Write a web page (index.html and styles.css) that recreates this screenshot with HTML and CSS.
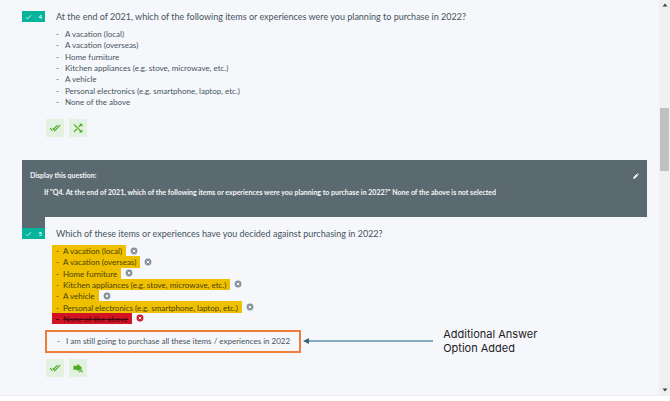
FILE: index.html
```html
<!DOCTYPE html>
<html lang="en">
<head>
<meta charset="utf-8">
<title>Survey editor</title>
<link rel="stylesheet" href="styles.css">
</head>
<body>
<svg class="defs" aria-hidden="true">
  <symbol id="double-check" viewBox="0 0 12 8"><path d="M1 4.2 3.3 6.6M3.6 4.2 5.8 6.6 11.2 1.2M4.8 4.9 8.6 1.2" fill="none" stroke="currentColor" stroke-width="1.1"/></symbol>
  <symbol id="check" viewBox="0 0 8 6"><path d="M1 3.2 2.8 5 7 1" fill="none" stroke="currentColor" stroke-width="1"/></symbol>
  <symbol id="remove" viewBox="0 0 8 8"><circle cx="4" cy="4" r="3.4" fill="currentColor"/><path d="M2.7 2.7 5.3 5.3M5.3 2.7 2.7 5.3" stroke="#f5f7fb" stroke-width="1"/></symbol>
</svg>
<div class="screen">
  <main class="page">
    <section class="question">
      <div class="rail"><div class="badge"><svg class="tick"><use href="#check"/></svg><span>4</span></div></div>
      <div class="body">
        <h2>At the end of 2021, which of the following items or experiences were you planning to purchase in 2022?</h2>
        <ul class="options">
          <li><span>A vacation (local)</span></li>
          <li><span>A vacation (overseas)</span></li>
          <li><span>Home furniture</span></li>
          <li><span>Kitchen appliances (e.g. stove, microwave, etc.)</span></li>
          <li><span>A vehicle</span></li>
          <li><span>Personal electronics (e.g. smartphone, laptop, etc.)</span></li>
          <li><span>None of the above</span></li>
        </ul>
        <div class="tools">
          <button type="button" aria-label="Validation"><svg class="double"><use href="#double-check"/></svg></button>
          <button type="button" aria-label="Randomize"><svg class="action" viewBox="0 0 10 10"><path d="M1 1.4 8.4 8.8M1 8.8 3.8 6M5.6 4.2 8.4 1.4" fill="none" stroke="currentColor" stroke-width="1.2"/><path d="M6 .7h3.3V4zM9.3 6.2v3.3H6z" fill="currentColor"/></svg></button>
        </div>
      </div>
    </section>

    <section class="logic">
      <header>
        <h3>Display this question:</h3>
        <button type="button" class="edit" aria-label="Edit"><svg viewBox="0 0 6 6"><path d="M.3 5.7V4.3L3.6 1 5 2.4 1.7 5.7zM4 .6 4.5.1 5.9 1.5 5.4 2z" fill="currentColor"/></svg></button>
      </header>
      <p>If "Q4. At the end of 2021, which of the following items or experiences were you planning to purchase in 2022?" None of the above is not selected</p>
    </section>

    <section class="question linked">
      <div class="rail"><div class="badge"><svg class="tick"><use href="#check"/></svg><span>5</span></div></div>
      <div class="body">
        <h2>Which of these items or experiences have you decided against purchasing in 2022?</h2>
        <ul class="options marked">
          <li><span>A vacation (local)</span><button type="button" aria-label="Remove"><svg><use href="#remove"/></svg></button></li>
          <li><span>A vacation (overseas)</span><button type="button" aria-label="Remove"><svg><use href="#remove"/></svg></button></li>
          <li><span>Home furniture</span><button type="button" aria-label="Remove"><svg><use href="#remove"/></svg></button></li>
          <li><span>Kitchen appliances (e.g. stove, microwave, etc.)</span><button type="button" aria-label="Remove"><svg><use href="#remove"/></svg></button></li>
          <li><span>A vehicle</span><button type="button" aria-label="Remove"><svg><use href="#remove"/></svg></button></li>
          <li><span>Personal electronics (e.g. smartphone, laptop, etc.)</span><button type="button" aria-label="Remove"><svg><use href="#remove"/></svg></button></li>
          <li class="excluded"><span>None of the above</span><button type="button" aria-label="Remove"><svg><use href="#remove"/></svg></button></li>
        </ul>
        <div class="added">
          <div class="frame"><span>I am still going to purchase all these items / experiences in 2022</span></div>
          <svg class="arrow" viewBox="0 0 130 8"><path d="M5 4H130" stroke="#5b92ac" stroke-width="1.6"/><path d="M0 4 6 1v6z" fill="#3c6478"/></svg>
          <p class="note">Additional Answer Option Added</p>
        </div>
        <div class="tools">
          <button type="button" aria-label="Validation"><svg class="double"><use href="#double-check"/></svg></button>
          <button type="button" aria-label="Carry forward"><svg class="action" viewBox="0 0 10 10"><path d="M.5 2.7h4V.8L9 4.7 4.5 8.4V6.8h-4z" fill="currentColor"/><path d="M6.2 9.5 8 5.5 9.6 9.5M6.7 8.3h2.4" fill="none" stroke="currentColor" stroke-width=".8"/></svg></button>
        </div>
      </div>
    </section>
  </main>
  <div class="scroll" aria-hidden="true">
    <svg viewBox="0 0 6 4"><path d="M3 .5 5.5 3.5h-5z" fill="#444"/></svg>
    <div class="track"><div class="thumb"></div></div>
    <svg viewBox="0 0 6 4"><path d="M3 3.5 5.5.5h-5z" fill="#444"/></svg>
  </div>
</div>
</body>
</html>
```
FILE: styles.css
```css
* { box-sizing: border-box; }
body {
  margin: 0;
  min-height: 100vh;
  padding-bottom: 5px;
  display: flex;
  background: #fff;
  color: #46545c;
  font: 8px/11px Lato, sans-serif;
}
h2, h3, p, ul { margin: 0; padding: 0; font-weight: 400; }
button { border: 0; padding: 0; background: none; color: inherit; font: inherit; display: flex; align-items: center; justify-content: center; }
svg { display: block; flex: none; }
.defs { position: absolute; width: 0; height: 0; }

.screen { flex: 1; display: flex; background: #f5f7fb; border-bottom: 1px solid #eceff2; }
.page { flex: 1; min-width: 0; padding: 11px 12px 0 22px; }

.question { display: flex; }
.rail { width: 23px; flex: none; }
.badge {
  height: 11px;
  padding: 0 3px;
  display: flex;
  align-items: center;
  justify-content: space-between;
  background: #06b39b;
  color: #d9fff8;
  font-size: 6px;
  font-weight: 700;
}
.tick { width: 7px; height: 6px; }
.body { flex: 1; min-width: 0; }
h2 { padding-left: 11px; font-size: 9px; line-height: 11px; }

.options {
  margin-top: 6px;
  min-height: 79px;
  display: flex;
  flex-direction: column;
  line-height: 10px;
  list-style: none;
}
.options li { flex: 1; display: flex; align-items: stretch; }
.options li > span { padding: 1px 0 0 11px; display: flex; align-items: center; }
.options li > span::before, .frame span::before { content: "-"; width: 9px; flex: none; }

.tools { display: flex; gap: 5px; margin: 12px 0 0 1px; }
.tools button { width: 18px; height: 18px; background: #e3f1e1; color: #4bab1d; }
.double { width: 12px; height: 8px; }
.action { width: 10px; height: 10px; }

.logic {
  margin-top: 23px;
  padding: 10px 8px 19px;
  background: #5b6970;
  color: #f4f6f7;
  font-size: 7px;
}
.logic header { display: flex; justify-content: space-between; align-items: center; }
.logic h3 { font-size: 7px; font-weight: 700; }
.logic p { padding: 6px 0 0 14px; font-weight: 700; }
.edit svg { width: 6px; height: 6px; }

.linked .rail { height: 11px; padding-top: 11px; background: #5b6970; }
.linked h2 { margin-top: 11px; }
.marked { margin-left: 7px; color: #4a4200; }
.marked li > span { padding: 1px 4px 0; background: #efc000; }
.marked li > span::before { width: 7px; }
.marked button { margin-left: 4px; width: 8px; color: #84919c; }
.marked svg { width: 8px; height: 8px; }
.marked .excluded > span { background: #d01424; color: #4d0710; text-decoration: line-through; }
.marked .excluded button { color: #d01424; }

.added { display: flex; align-items: center; margin-top: 3px; }
.frame { padding: 4px 9px 4px 10px; border: 2px solid #ec7d3a; }
.frame span { display: flex; white-space: nowrap; }
.arrow { width: 130px; height: 8px; margin-left: 2px; }
.note { width: 104px; margin-left: 10px; font: 11px/14px Inter, sans-serif; color: #1e2226; }
.added + .tools { margin-top: 4px; }

.scroll {
  width: 11px;
  padding: 3px 1px;
  display: flex;
  flex-direction: column;
  align-items: center;
  background: #f0f0f0;
}
.scroll svg { width: 6px; height: 4px; }
.track { flex: 1; width: 100%; display: flex; flex-direction: column; }
.track::before { content: ""; flex: 101; }
.track::after { content: ""; flex: 217; }
.thumb { flex: 63; background: #c1c1c1; }
```
